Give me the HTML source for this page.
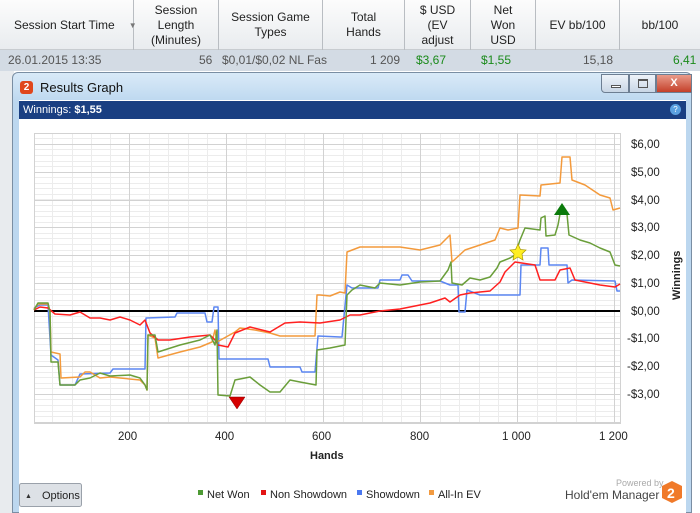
<!DOCTYPE html>
<html><head><meta charset="utf-8"><style>
*{margin:0;padding:0;box-sizing:border-box}
body{width:700px;height:513px;overflow:hidden;position:relative;font-family:"Liberation Sans",sans-serif;background:#fff}
.hdr{position:absolute;left:0;top:0;width:700px;height:50px;background:linear-gradient(#fcfcfc,#e9ecef);border-bottom:1px solid #c8ccd0}
.hc{position:absolute;top:0;height:50px;display:flex;align-items:center;justify-content:center;text-align:center;font-size:12px;color:#222;line-height:15px;border-right:1px solid #b9bdc2}
.row{position:absolute;left:0;top:50px;width:700px;height:21px;background:#d3dbe4;font-size:12px;color:#555}
.row span{position:absolute;top:3px}
.g{color:#1a8a1a}
.left{position:absolute;left:0;top:71px;width:14px;height:442px;background:#e8ebee}
.win{position:absolute;left:12px;top:72px;width:680px;height:441px;background:linear-gradient(#d9eaf8,#bcd7ef 30px,#bcd7ef);border:1px solid #7a8ea3;border-radius:6px 6px 0 0}
.title{position:absolute;left:26px;top:80px;font-size:13px;color:#111}
.logo{position:absolute;left:20px;top:81px;width:13px;height:13px;background:#e0461c;border-radius:3px;color:#fff;font-size:10px;font-weight:bold;text-align:center;line-height:13px}
.content{position:absolute;left:19px;top:100px;width:667px;height:413px;background:#fff}
.bar{position:absolute;left:19px;top:101px;width:667px;height:18px;background:#1a3f82;color:#fff;font-size:11px;line-height:18px;padding-left:4px}
.btns{position:absolute;left:601px;top:74px;height:19px;display:flex}
.btns div{height:19px;border:1px solid #6d7e92;background:linear-gradient(#eef3f9,#c9d6e5);position:relative}
</style></head><body>
<div class="hdr">
<div class="hc" style="left:0;width:134px;justify-content:flex-start;padding-left:14px;white-space:nowrap">Session Start Time<span style="margin-left:14px;color:#777;font-size:8px">▼</span></div>
<div class="hc" style="left:134px;width:85px">Session<br>Length<br>(Minutes)</div>
<div class="hc" style="left:219px;width:104px">Session Game<br>Types</div>
<div class="hc" style="left:323px;width:82px">Total<br>Hands</div>
<div class="hc" style="left:405px;width:66px">$ USD<br>(EV<br>adjust</div>
<div class="hc" style="left:471px;width:65px">Net<br>Won<br>USD</div>
<div class="hc" style="left:536px;width:84px">EV bb/100</div>
<div class="hc" style="left:620px;width:80px;border:none">bb/100</div>
</div>
<div class="row"><span style="left:8px">26.01.2015 13:35</span><span style="left:199px">56</span><span style="left:222px">$0,01/$0,02 NL Fas</span><span style="left:370px">1 209</span><span class="g" style="left:416px">$3,67</span><span class="g" style="left:481px">$1,55</span><span style="left:583px">15,18</span><span class="g" style="left:673px">6,41</span></div>
<div class="left"></div>
<div class="win"></div>
<div class="logo">2</div><div class="title" style="left:40px">Results Graph</div>
<div class="btns"><div style="width:28px;border-radius:0 0 0 4px"><span style="position:absolute;left:9px;top:10px;width:10px;height:3px;background:#fff;border:1px solid #555"></span></div><div style="width:27px"><span style="position:absolute;left:8px;top:4px;width:10px;height:9px;border:1px solid #555;border-top-width:2px"></span></div><div style="width:36px;background:linear-gradient(#e99b8a,#c4402a);color:#fff;font-size:11px;text-align:center;font-weight:bold;line-height:17px">X</div></div>
<div class="content"></div>
<div class="bar">Winnings: <b>$1,55</b><span style="position:absolute;right:5px;top:3px;width:11px;height:11px;border-radius:50%;background:#5aa0e0;font-size:8px;line-height:11px;text-align:center">?</span></div>
<svg style="position:absolute;left:0;top:0" width="700" height="513">
<g stroke="#ececec" stroke-width="1">
<path d="M34 138.5H620M34 144.5H620M34 149.5H620M34 155.5H620M34 161.5H620M34 166.5H620M34 172.5H620M34 177.5H620M34 183.5H620M34 188.5H620M34 194.5H620M34 199.5H620M34 205.5H620M34 211.5H620M34 216.5H620M34 222.5H620M34 227.5H620M34 233.5H620M34 238.5H620M34 244.5H620M34 250.5H620M34 255.5H620M34 261.5H620M34 266.5H620M34 272.5H620M34 277.5H620M34 283.5H620M34 289.5H620M34 294.5H620M34 300.5H620M34 305.5H620M34 316.5H620M34 322.5H620M34 327.5H620M34 333.5H620M34 338.5H620M34 344.5H620M34 350.5H620M34 355.5H620M34 361.5H620M34 366.5H620M34 372.5H620M34 377.5H620M34 383.5H620M34 388.5H620M34 394.5H620M34 399.5H620M34 405.5H620M34 411.5H620M34 416.5H620"/>
<path d="M52.5 133V423M72.5 133V423M91.5 133V423M110.5 133V423M149.5 133V423M168.5 133V423M188.5 133V423M207.5 133V423M246.5 133V423M265.5 133V423M285.5 133V423M304.5 133V423M343.5 133V423M362.5 133V423M382.5 133V423M401.5 133V423M440.5 133V423M459.5 133V423M479.5 133V423M498.5 133V423M537.5 133V423M556.5 133V423M576.5 133V423M595.5 133V423"/>
</g>
<g stroke="#d2d2d2" stroke-width="1" fill="none">
<rect x="34.5" y="133.5" width="586" height="290"/>
<path d="M34 144.5H620M34 172.5H620M34 200.5H620M34 227.5H620M34 255.5H620M34 283.5H620M34 338.5H620M34 366.5H620M34 394.5H620M34 422.5H620M129.5 133V423M226.5 133V423M323.5 133V423M420.5 133V423M517.5 133V423M614.5 133V423"/>
</g>
<path d="M34 311H620" stroke="#000" stroke-width="2"/>
<g fill="none" stroke-width="1.5" stroke-linejoin="round">
<polyline stroke="#5b86f2" points="34,308 40,305 48,305 51,355 58,360 60,385 75,385 80,374 110,373 113,369 145,369 146,318 175,317 177,313 205,313 207,322 212,322 214,307 218,307 219,359 268,359 270,367 300,367 302,372 315,372 318,336 340,337 342,337 347,285 352,288 378,288 380,280 400,280 402,275 408,275 412,281 440,281 450,285 458,285 459,312 465,312 467,290 480,295 520,295 521,265 540,265 541,248 548,248 549,265 567,265 568,283 572,280 615,281 617,291 620,291"/>
<polyline stroke="#f39a3c" points="34,309 38,304 48,304 50,312 51,352 60,354 61,378 80,377 85,372 90,372 100,378 110,377 140,380 145,385 147,390 148,335 155,338 158,358 180,352 200,347 212,342 215,330 217,342 235,332 240,328 255,330 270,333 280,336 300,336 315,336 317,295 320,295 330,296 340,292 345,293 347,252 360,247 400,247 420,250 440,245 450,235 452,262 465,250 480,245 495,240 500,228 508,230 518,228 520,195 540,196 541,185 560,183 562,157 570,157 572,180 585,185 600,195 610,198 613,210 620,208"/>
<polyline stroke="#ff2020" points="34,310 40,307 48,308 55,314 70,315 80,312 90,318 100,318 110,320 120,317 130,320 140,325 145,320 150,333 158,340 170,340 190,337 210,335 215,340 218,345 228,347 235,333 250,327 270,332 285,323 300,322 320,323 340,320 350,315 360,315 380,311 400,309 430,303 445,298 450,302 460,295 470,293 490,291 500,282 505,272 515,262 535,265 540,280 555,280 560,270 570,268 575,280 600,285 615,287 620,284"/>
<polyline stroke="#6a9e3a" points="34,310 38,303 48,303 50,312 51,362 58,362 60,385 75,385 80,380 90,378 100,373 110,376 130,375 140,378 145,385 147,390 148,335 155,335 158,352 180,345 200,340 210,335 215,345 217,330 218,395 230,396 235,380 250,377 260,385 270,392 280,392 290,380 300,382 316,385 317,350 330,348 345,345 347,295 352,290 360,285 375,288 380,283 400,285 420,282 440,281 448,270 451,262 452,283 462,285 470,278 480,280 490,277 497,268 500,262 510,258 515,255 520,240 525,228 540,230 541,218 545,216 546,236 555,235 558,225 560,214 567,214 569,235 580,240 590,243 600,248 610,252 615,265 620,266"/>
</g>
<polygon points="229,397 245,397 237,409" fill="#d50000" stroke="#800" stroke-width=".5"/>
<polygon points="554,215 570,215 562,203" fill="#0a7a0a"/>
<polygon points="518,244 520.5,249.5 526,250 522,254 523,260 518,257 513,260 514,254 510,250 515.5,249.5" fill="#ffee22" stroke="#aa9900" stroke-width=".7"/>
<g font-size="11.5" fill="#222" font-family="Liberation Sans,sans-serif">
<text x="631" y="148">$6,00</text><text x="631" y="176">$5,00</text><text x="631" y="204">$4,00</text><text x="631" y="231">$3,00</text><text x="631" y="259">$2,00</text><text x="631" y="287">$1,00</text><text x="631" y="315">$0,00</text><text x="627" y="342">-$1,00</text><text x="627" y="370">-$2,00</text><text x="627" y="398">-$3,00</text>
<text x="118" y="440">200</text><text x="215" y="440">400</text><text x="312" y="440">600</text><text x="410" y="440">800</text><text x="502" y="440">1 000</text><text x="599" y="440">1 200</text>
<text x="310" y="459" font-weight="bold" font-size="11">Hands</text>
<text transform="translate(680,300) rotate(-90)" font-weight="bold" font-size="11">Winnings</text>
</g>
<g font-size="11" fill="#222" font-family="Liberation Sans,sans-serif">
<rect x="198" y="490" width="5" height="5" fill="#4d9a34"/><text x="207" y="498">Net Won</text>
<rect x="261" y="490" width="5" height="5" fill="#e31414"/><text x="270" y="498">Non Showdown</text>
<rect x="357" y="490" width="5" height="5" fill="#4a78f0"/><text x="366" y="498">Showdown</text>
<rect x="429" y="490" width="5" height="5" fill="#f29a40"/><text x="438" y="498">All-In EV</text>
<text x="616" y="486" font-size="9" fill="#aaa">Powered by</text>
<text x="565" y="499" font-size="12" fill="#444">Hold'em Manager</text>
</g>
<polygon points="672,481 682,486 682,498 672,503 662,498 662,486" fill="#f07a2a"/>
<text x="667" y="498" font-size="14" font-weight="bold" fill="#fff" font-family="Liberation Sans,sans-serif">2</text>
<rect x="19.5" y="483.5" width="62" height="23" rx="2" fill="#dde1e6" stroke="#9aa1aa"/>
<text x="25" y="498" font-size="7" fill="#333">▲</text>
<text x="42" y="499" font-size="11" fill="#222" font-family="Liberation Sans,sans-serif">Options</text>
</svg>
</body></html>
